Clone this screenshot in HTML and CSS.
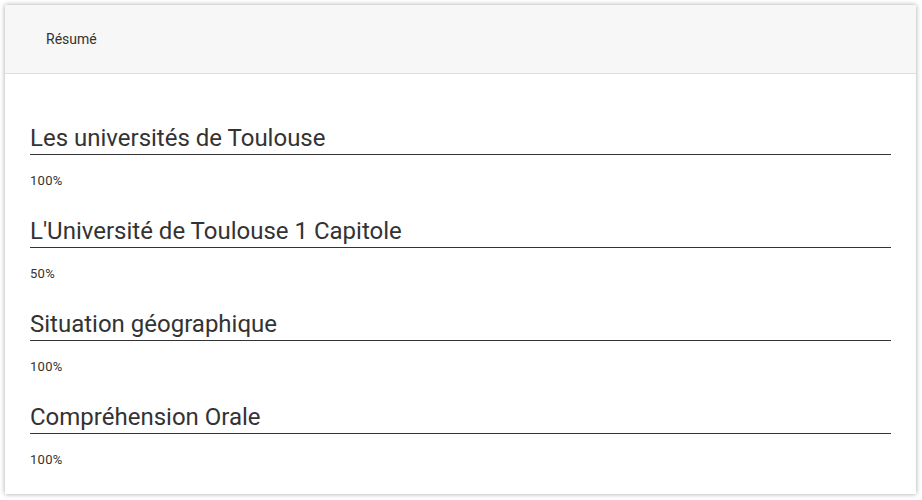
FILE: index.html
```html
<!DOCTYPE html>
<html lang="fr">
<head>
<meta charset="utf-8">
<title>Résumé</title>
<link rel="stylesheet" href="styles.css">
</head>
<body>
<div class="card">
  <div class="card-header">Résumé</div>
  <div class="card-body">
    <section class="item">
      <h2 class="item-title">Les universités de Toulouse</h2>
      <div class="item-score">100%</div>
    </section>
    <section class="item">
      <h2 class="item-title">L'Université de Toulouse 1 Capitole</h2>
      <div class="item-score">50%</div>
    </section>
    <section class="item">
      <h2 class="item-title">Situation géographique</h2>
      <div class="item-score">100%</div>
    </section>
    <section class="item">
      <h2 class="item-title">Compréhension Orale</h2>
      <div class="item-score">100%</div>
    </section>
  </div>
</div>
</body>
</html>
```
FILE: styles.css
```css
html, body {
  margin: 0;
  padding: 0;
  background: #ffffff;
}
body {
  padding: 5px;
  font-family: Roboto, "Liberation Sans", sans-serif;
  color: #333333;
}
.card {
  width: 911px;
  background: #ffffff;
  box-shadow: 0 0 5px rgba(0, 0, 0, 0.35);
}
.card-header {
  height: 68px;
  line-height: 68px;
  padding: 0 41px;
  font-size: 14px;
  background: #f7f7f7;
  border-bottom: 1px solid #dedede;
}
.card-body {
  padding: 50px 25px 27px;
  display: flex;
  flex-direction: column;
  gap: 29px;
}
.item-title {
  margin: 0;
  font-size: 24px;
  font-weight: 400;
  line-height: 28px;
  padding-bottom: 2px;
  border-bottom: 1px solid #333333;
  color: #333333;
}
.item-score {
  margin-top: 19px;
  font-size: 13px;
  line-height: 14px;
  letter-spacing: 0.3px;
  color: #333333;
}
```
